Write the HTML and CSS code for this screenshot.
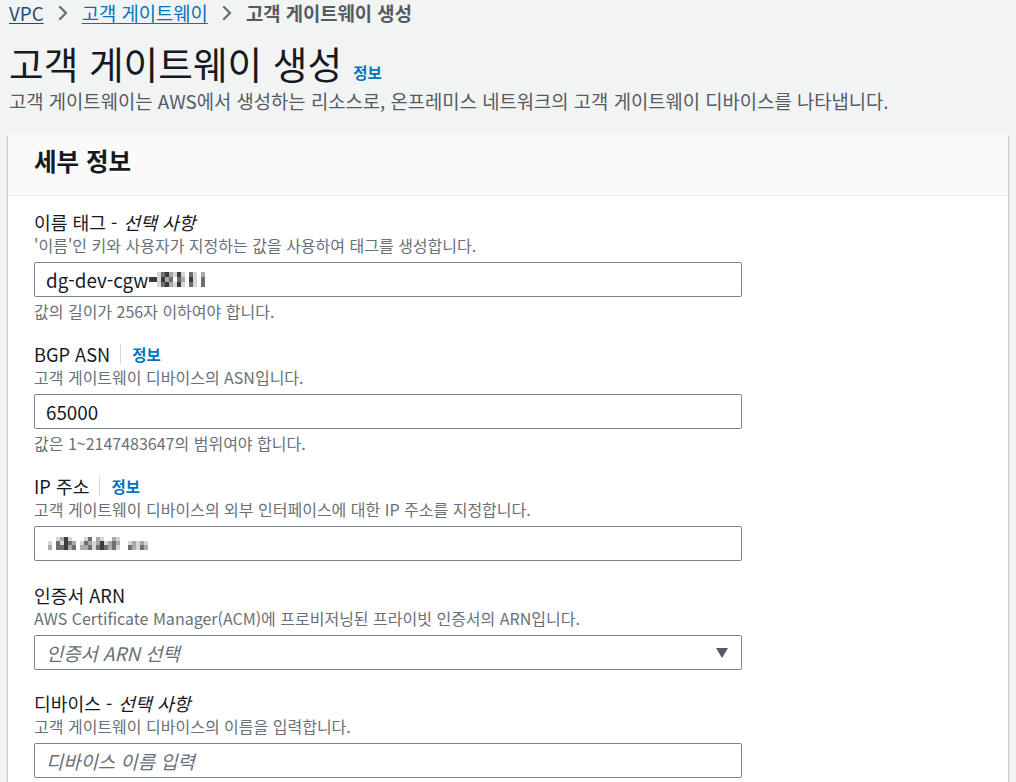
FILE: index.html
```html
<!DOCTYPE html>
<html lang="ko">
<head>
<meta charset="utf-8">
<title>고객 게이트웨이 생성</title>
<link rel="stylesheet" href="styles.css">
</head>
<body>
<div class="page">
  <nav class="crumbs">
    <a class="crumb-link visited" href="#">VPC</a>
    <span class="sep"><svg width="12" height="16" viewBox="0 0 12 16"><polyline points="3,2 9,8 3,14" fill="none" stroke="#687078" stroke-width="2.4" stroke-linecap="round" stroke-linejoin="round"/></svg></span>
    <a class="crumb-link" href="#">고객 게이트웨이</a>
    <span class="sep"><svg width="12" height="16" viewBox="0 0 12 16"><polyline points="3,2 9,8 3,14" fill="none" stroke="#687078" stroke-width="2.4" stroke-linecap="round" stroke-linejoin="round"/></svg></span>
    <span class="current">고객 게이트웨이 생성</span>
  </nav>

  <div class="title-row">
    <h1>고객 게이트웨이 생성</h1>
    <a class="info" href="#">정보</a>
  </div>
  <p class="lead">고객 게이트웨이는 AWS에서 생성하는 리소스로, 온프레미스 네트워크의 고객 게이트웨이 디바이스를 나타냅니다.</p>

  <section class="card">
    <header class="card-head"><h2>세부 정보</h2></header>
    <div class="card-body">

      <div class="field">
        <div class="label">이름 태그 -<em class="opt">선택 사항</em></div>
        <div class="desc">'이름'인 키와 사용자가 지정하는 값을 사용하여 태그를 생성합니다.</div>
        <div class="control"><span class="value">dg-dev-cgw</span><span class="blob blob-a"><i class="s0"></i><i class="s4"></i><i class="s0"></i><i class="s0"></i><i class="s4"></i><i class="s0"></i><i class="s1"></i><i class="s1"></i><i class="s1"></i><i class="s3"></i><i class="s4"></i><i class="s3"></i><i class="s4"></i><i class="s2"></i><i class="s4"></i><i class="s2"></i><i class="s3"></i><i class="s2"></i><i class="s1"></i><i class="s0"></i><i class="s1"></i><i class="s4"></i><i class="s3"></i><i class="s4"></i><i class="s1"></i><i class="s2"></i><i class="s1"></i><i class="s0"></i><i class="s0"></i><i class="s0"></i><i class="s3"></i><i class="s4"></i><i class="s3"></i><i class="s1"></i><i class="s1"></i><i class="s1"></i><i class="s0"></i><i class="s0"></i><i class="s0"></i><i class="s2"></i><i class="s3"></i><i class="s3"></i></span></div>
        <div class="constraint">값의 길이가 256자 이하여야 합니다.</div>
      </div>

      <div class="field">
        <div class="label">BGP ASN<span class="divider"></span><a class="info small" href="#">정보</a></div>
        <div class="desc">고객 게이트웨이 디바이스의 ASN입니다.</div>
        <div class="control"><span class="value">65000</span></div>
        <div class="constraint">값은 1~2147483647의 범위여야 합니다.</div>
      </div>

      <div class="field">
        <div class="label">IP 주소<span class="divider"></span><a class="info small" href="#">정보</a></div>
        <div class="desc">고객 게이트웨이 디바이스의 외부 인터페이스에 대한 IP 주소를 지정합니다.</div>
        <div class="control"><span class="blob blob-b"><i class="s0"></i><i class="s1"></i><i class="s2"></i><i class="s0"></i><i class="s0"></i><i class="s0"></i><i class="s1"></i><i class="s3"></i><i class="s3"></i><i class="s2"></i><i class="s1"></i><i class="s3"></i><i class="s4"></i><i class="s4"></i><i class="s4"></i><i class="s1"></i><i class="s3"></i><i class="s2"></i><i class="s0"></i><i class="s2"></i><i class="s3"></i><i class="s0"></i><i class="s0"></i><i class="s0"></i><i class="s0"></i><i class="s1"></i><i class="s2"></i><i class="s1"></i><i class="s3"></i><i class="s2"></i><i class="s3"></i><i class="s2"></i><i class="s3"></i><i class="s0"></i><i class="s1"></i><i class="s1"></i><i class="s2"></i><i class="s2"></i><i class="s3"></i><i class="s1"></i><i class="s4"></i><i class="s4"></i><i class="s0"></i><i class="s1"></i><i class="s3"></i><i class="s0"></i><i class="s2"></i><i class="s2"></i><i class="s2"></i><i class="s3"></i><i class="s3"></i><i class="s1"></i><i class="s2"></i><i class="s1"></i><i class="s0"></i><i class="s0"></i><i class="s0"></i><i class="s0"></i><i class="s0"></i><i class="s0"></i><i class="s0"></i><i class="s1"></i><i class="s3"></i><i class="s0"></i><i class="s2"></i><i class="s2"></i><i class="s0"></i><i class="s1"></i><i class="s1"></i><i class="s0"></i><i class="s2"></i><i class="s3"></i><i class="s0"></i><i class="s1"></i><i class="s2"></i></span></div>
      </div>

      <div class="field">
        <div class="label">인증서 ARN</div>
        <div class="desc">AWS Certificate Manager(ACM)에 프로비저닝된 프라이빗 인증서의 ARN입니다.</div>
        <div class="control select"><span class="placeholder">인증서 ARN 선택</span><svg class="caret" width="12" height="10" viewBox="0 0 12 10"><polygon points="0,0 12,0 6,10" fill="#545b64"/></svg></div>
      </div>

      <div class="field">
        <div class="label">디바이스 -<em class="opt">선택 사항</em></div>
        <div class="desc">고객 게이트웨이 디바이스의 이름을 입력합니다.</div>
        <div class="control"><span class="placeholder">디바이스 이름 입력</span></div>
      </div>

    </div>
  </section>
</div>
</body>
</html>
```

FILE: styles.css
```css
html, body {
  margin: 0;
  padding: 0;
}

body {
  background: #f2f3f3;
  font-family: "Noto Sans CJK KR", "Noto Sans", sans-serif;
  color: #16191f;
}

.page {
  padding: 0 8px;
}

/* Breadcrumbs */
.crumbs {
  display: flex;
  align-items: center;
  height: 26px;
  font-size: 18.8px;
  line-height: 26px;
  padding-left: 1px;
}

.crumb-link {
  color: #0073bb;
  text-decoration: underline;
  text-underline-offset: 2px;
}

.crumb-link.visited {
  color: #1b4e79;
}

.sep {
  display: flex;
  align-items: center;
  margin: 0 13px 0 13px;
}

.current {
  font-weight: 700;
  color: #545b64;
}

/* Title */
.title-row {
  display: flex;
  align-items: baseline;
  margin-top: 15px;
  padding-left: 1px;
}

.title-row h1 {
  margin: 0;
  font-size: 37.7px;
  line-height: 44px;
  font-weight: 400;
  color: #16191f;
}

.info {
  color: #0073bb;
  font-weight: 700;
  font-size: 15.5px;
  text-decoration: none;
  margin-left: 11px;
}

.lead {
  margin: 4px 0 0;
  padding-left: 1px;
  font-size: 18.8px;
  line-height: 24px;
  color: #545b64;
}

/* Card */
.card {
  margin-top: 22px;
  background: #ffffff;
  box-shadow: 0 1px 1px 0 rgba(0, 28, 36, 0.3), 1px 1px 1px 0 rgba(0, 28, 36, 0.15), -1px 1px 1px 0 rgba(0, 28, 36, 0.15);
}

.card-head {
  box-sizing: border-box;
  height: 61px;
  padding: 11px 26px 0;
  background: #fafafa;
  border-bottom: 1px solid #eaeded;
}

.card-head h2 {
  margin: 0;
  font-size: 24.5px;
  line-height: 30px;
  font-weight: 700;
  color: #16191f;
}

.card-body {
  padding: 15px 26px 30px;
}

.field {
  margin-bottom: 22px;
}

.field:nth-child(3) {
  margin-bottom: 23px;
}

.label {
  display: flex;
  align-items: center;
  font-size: 18.2px;
  line-height: 22px;
  color: #16191f;
}

.label .opt {
  font-style: italic;
  margin-left: 6px;
}

.divider {
  display: inline-block;
  width: 1px;
  height: 20px;
  background: #d5dbdb;
  margin: 0 11px 0 10px;
}

.info.small {
  margin-left: 0;
  font-size: 15.5px;
}

.desc {
  margin-top: 2px;
  font-size: 16px;
  line-height: 20px;
  color: #687078;
}

.control {
  box-sizing: border-box;
  display: flex;
  align-items: center;
  width: 708px;
  height: 35px;
  margin-top: 7px;
  padding: 0 11px;
  border: 1px solid #7d8590;
  border-radius: 2px;
  background: #ffffff;
  font-size: 18.8px;
  color: #16191f;
}

.placeholder {
  font-style: italic;
  color: #687078;
}

.select {
  justify-content: space-between;
  padding-right: 13px;
}

.constraint {
  margin-top: 4px;
  font-size: 16px;
  line-height: 20px;
  color: #687078;
}

/* Pixelated (redacted) values */
.blob {
  display: inline-grid;
  grid-auto-flow: column;
  grid-auto-columns: 4px;
}

.blob-a {
  grid-template-rows: 5px 5px 5px;
  margin-left: 1px;
}

.blob-b {
  grid-template-rows: 4px 4px 5px;
  margin-left: 2px;
}

.blob i {
  display: block;
}

.s0 { background: transparent; }
.s1 { background: #d6d6d6; }
.s2 { background: #a9a9a9; }
.s3 { background: #6f6f6f; }
.s4 { background: #3c3c3c; }
```
